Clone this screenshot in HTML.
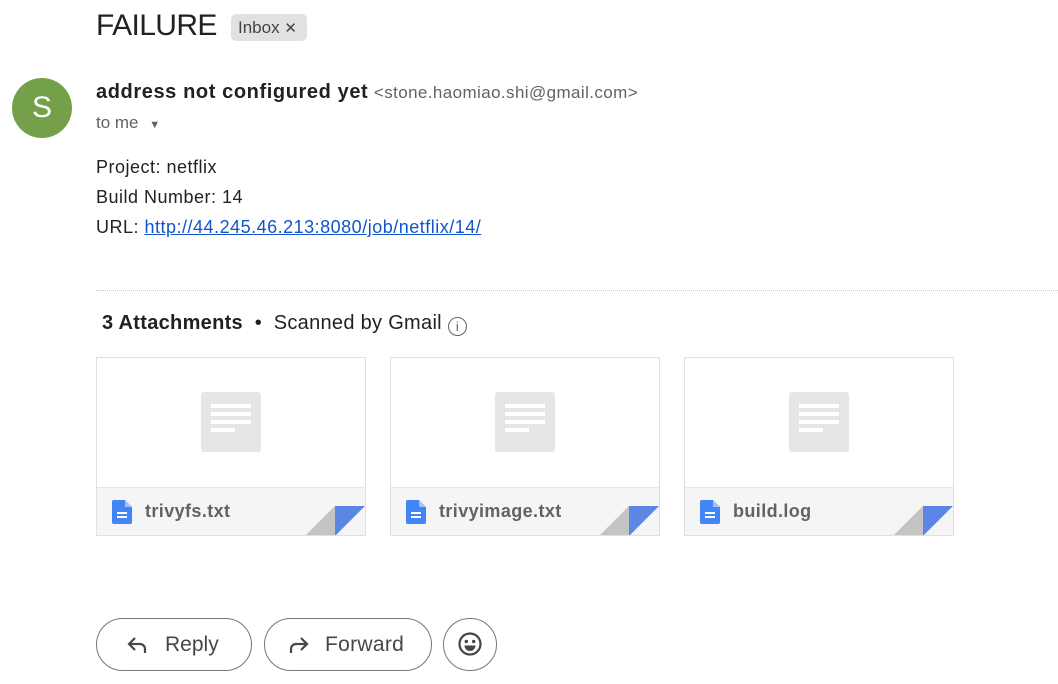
<!DOCTYPE html><html><head><style>
body{margin:0;width:1058px;height:684px;background:#fff;font-family:"Liberation Sans",sans-serif;position:relative;overflow:hidden;color:#202124}
.a{position:absolute}
.card{position:absolute;top:357px;width:268px;height:177px;border:1px solid #e0e0e0;background:#fff;overflow:hidden}
.card .doc{position:absolute;left:104px;top:34px;width:60px;height:60px;background:#e6e6e6;border-radius:3px}
.card .doc i{position:absolute;left:10px;height:4px;background:#fff;display:block}
.card .ft{position:absolute;left:0;top:129px;width:268px;height:48px;background:#f5f5f5;border-top:1px solid #e6e6e6}
.card .nm{position:absolute;left:48px;top:13px;font-size:18px;font-weight:bold;color:#5f6368;letter-spacing:0.4px}
.btn{position:absolute;top:618px;height:51px;border:1px solid #747775;border-radius:27px;font-size:21px;color:#444746}
</style></head><body>
<div class="a" style="left:96px;top:9px;font-size:30px;color:#202124;letter-spacing:-0.6px">FAILURE</div>
<div class="a" style="left:231px;top:14px;width:76px;height:27px;background:#e0e2e0;border-radius:5px;font-size:17px;color:#444;line-height:27px;text-indent:7px">Inbox <span style="font-size:15px">✕</span></div>
<div class="a" style="left:12px;top:78px;width:60px;height:60px;border-radius:50%;background:#74a04a;color:#fff;font-size:30px;text-align:center;line-height:60px">S</div>
<div class="a" style="left:96px;top:81px;font-size:20px;white-space:nowrap"><b style="letter-spacing:0.6px">address not configured yet</b> <span style="font-size:17px;color:#5f6368;letter-spacing:0.4px">&lt;stone.haomiao.shi@gmail.com&gt;</span></div>
<div class="a" style="left:96px;top:113px;font-size:17px;color:#5f6368">to me <span style="font-size:11px;margin-left:6px">▼</span></div>
<div class="a" style="left:96px;top:152px;font-size:18px;line-height:30px;color:#222;letter-spacing:0.5px">Project: netflix<br>Build Number: 14<br>URL: <a style="color:#1155cc;text-decoration:underline">http://44.245.46.213:8080/job/netflix/14/</a></div>
<div class="a" style="left:96px;top:290px;width:962px;border-top:1px dotted #ccc"></div>
<div class="a" style="left:102px;top:312px;font-size:20px;color:#202124;white-space:nowrap;letter-spacing:0.3px"><b>3 Attachments</b> &nbsp;•&nbsp; Scanned by Gmail <span style="display:inline-block;width:17px;height:17px;border:1.5px solid #5f6368;border-radius:50%;font-size:13px;text-align:center;line-height:17px;color:#5f6368;vertical-align:-2px;letter-spacing:0">i</span></div>
<div class="card" style="left:96px"><div class="doc"><i style="top:12px;width:40px"></i><i style="top:20px;width:40px"></i><i style="top:28px;width:40px"></i><i style="top:36px;width:24px"></i></div><div class="ft"><svg class="a" style="left:15px;top:12px" width="20" height="24" viewBox="0 0 20 24"><path d="M2 0h11l7 7v15a2 2 0 0 1-2 2H2a2 2 0 0 1-2-2V2a2 2 0 0 1 2-2z" fill="#4285f4"/><path d="M13 0v7h7" fill="#a1c2fa"/><rect x="5" y="12" width="10" height="2" fill="#fff"/><rect x="5" y="16" width="10" height="2" fill="#fff"/></svg><div class="nm">trivyfs.txt</div><svg class="a" style="left:208px;top:18px" width="60" height="30"><polygon points="0,30 30,0 30,30" fill="#c4c4c4"/><polygon points="30,0 60,0 30,30" fill="#5b86e5"/></svg></div></div>
<div class="card" style="left:390px"><div class="doc"><i style="top:12px;width:40px"></i><i style="top:20px;width:40px"></i><i style="top:28px;width:40px"></i><i style="top:36px;width:24px"></i></div><div class="ft"><svg class="a" style="left:15px;top:12px" width="20" height="24" viewBox="0 0 20 24"><path d="M2 0h11l7 7v15a2 2 0 0 1-2 2H2a2 2 0 0 1-2-2V2a2 2 0 0 1 2-2z" fill="#4285f4"/><path d="M13 0v7h7" fill="#a1c2fa"/><rect x="5" y="12" width="10" height="2" fill="#fff"/><rect x="5" y="16" width="10" height="2" fill="#fff"/></svg><div class="nm">trivyimage.txt</div><svg class="a" style="left:208px;top:18px" width="60" height="30"><polygon points="0,30 30,0 30,30" fill="#c4c4c4"/><polygon points="30,0 60,0 30,30" fill="#5b86e5"/></svg></div></div>
<div class="card" style="left:684px"><div class="doc"><i style="top:12px;width:40px"></i><i style="top:20px;width:40px"></i><i style="top:28px;width:40px"></i><i style="top:36px;width:24px"></i></div><div class="ft"><svg class="a" style="left:15px;top:12px" width="20" height="24" viewBox="0 0 20 24"><path d="M2 0h11l7 7v15a2 2 0 0 1-2 2H2a2 2 0 0 1-2-2V2a2 2 0 0 1 2-2z" fill="#4285f4"/><path d="M13 0v7h7" fill="#a1c2fa"/><rect x="5" y="12" width="10" height="2" fill="#fff"/><rect x="5" y="16" width="10" height="2" fill="#fff"/></svg><div class="nm">build.log</div><svg class="a" style="left:208px;top:18px" width="60" height="30"><polygon points="0,30 30,0 30,30" fill="#c4c4c4"/><polygon points="30,0 60,0 30,30" fill="#5b86e5"/></svg></div></div>
<div class="btn" style="left:96px;width:154px"><svg class="a" style="left:30px;top:16px" width="22" height="20" viewBox="0 0 22 20"><path d="M8 3L2 9l6 6M2 9h11a5 5 0 0 1 5 5v4" fill="none" stroke="#444746" stroke-width="2.2"/></svg><span class="a" style="left:68px;top:14px">Reply</span></div>
<div class="btn" style="left:264px;width:166px"><svg class="a" style="left:22px;top:16px" width="22" height="20" viewBox="0 0 22 20"><path d="M14 3l6 6-6 6M20 9H9a5 5 0 0 0-5 5v4" fill="none" stroke="#444746" stroke-width="2.2"/></svg><span class="a" style="left:60px;top:14px;letter-spacing:0.3px">Forward</span></div>
<div class="btn" style="left:443px;width:52px"><svg class="a" style="left:13px;top:12px" width="26" height="26" viewBox="0 0 26 26"><circle cx="13" cy="13" r="10.5" fill="none" stroke="#444746" stroke-width="2.2"/><circle cx="9.3" cy="10.5" r="1.7" fill="#444746"/><circle cx="16.7" cy="10.5" r="1.7" fill="#444746"/><path d="M7.5 14.5h11a5.5 5.5 0 0 1-11 0z" fill="#444746"/></svg></div>
</body></html>
